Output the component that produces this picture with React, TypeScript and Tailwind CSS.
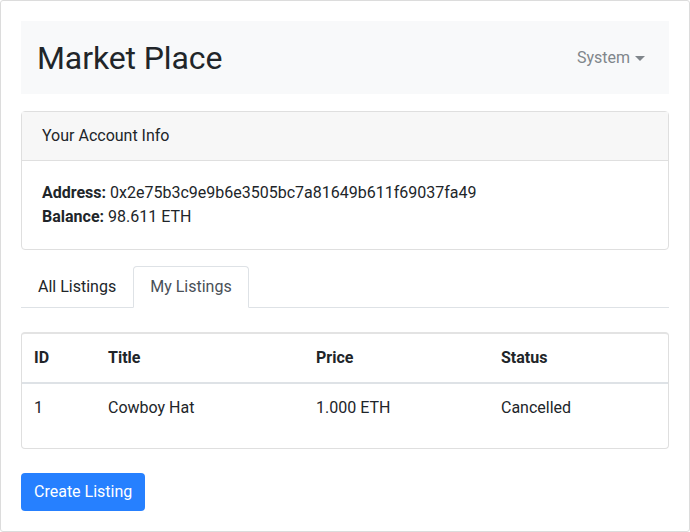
export default function App() {
  return (
    <div className="w-[690px] h-[532px] bg-white font-['Roboto',sans-serif] text-[#212529]">
      <div className="h-full border border-[#dcdcdc] rounded-[3px] px-5 pt-5">
        {/* Navbar */}
        <div className="h-[73px] bg-[#f8f9fa] flex items-center justify-between pl-4 pr-6">
          <h1 className="text-[32px] leading-none font-normal tracking-[-0.1px]">Market Place</h1>
          <button className="flex items-center gap-[5px] text-[16px] text-[#80868b]">
            System
            <span className="w-0 h-0 border-x-[5px] border-x-transparent border-t-[5px] border-t-[#80868b] mt-[1px]" />
          </button>
        </div>

        {/* Account card */}
        <div className="mt-[17px] border border-[#dfdfdf] rounded-[4px]">
          <div className="h-[49px] bg-[#f7f7f7] border-b border-[#dfdfdf] flex items-center px-5 text-[16px]">
            Your Account Info
          </div>
          <div className="px-5 pt-[20px] pb-[20px] text-[16px] leading-6">
            <div><span className="font-bold">Address:</span> 0x2e75b3c9e9b6e3505bc7a81649b611f69037fa49</div>
            <div><span className="font-bold">Balance:</span> 98.611 ETH</div>
          </div>
        </div>

        {/* Tabs */}
        <div className="mt-[16px] flex border-b border-[#dee2e6] h-[42px] text-[16px]">
          <div className="px-4 pt-[8px] text-[#212529] border border-transparent">All Listings</div>
          <div className="px-4 pt-[8px] text-[#495057] bg-white border border-[#dee2e6] border-b-white rounded-t-[4px] -mb-px">My Listings</div>
        </div>

        {/* Listings table */}
        <div className="mt-6 border border-[#dfdfdf] border-t-2 border-t-[#e3e3e3] rounded-[4px] h-[117px]">
          <table className="w-full text-[16px] text-left">
            <thead>
              <tr className="h-[49px] border-b-2 border-[#dee2e6]">
                <th className="w-[74px] pl-3 font-bold">ID</th>
                <th className="w-[208px] pl-3 font-bold">Title</th>
                <th className="w-[185px] pl-3 font-bold">Price</th>
                <th className="pl-3 font-bold">Status</th>
              </tr>
            </thead>
            <tbody>
              <tr className="h-[49px]">
                <td className="pl-3">1</td>
                <td className="pl-3">Cowboy Hat</td>
                <td className="pl-3">1.000 ETH</td>
                <td className="pl-3">Cancelled</td>
              </tr>
            </tbody>
          </table>
        </div>

        {/* Create button */}
        <button className="mt-6 h-[38px] px-[13px] bg-[#2680ff] text-white text-[16px] rounded-[4px]">
          Create Listing
        </button>
      </div>
    </div>
  );
}
